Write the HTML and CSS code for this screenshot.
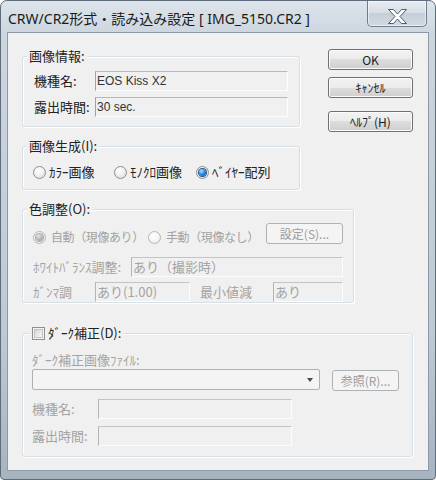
FILE: index.html
```html
<!DOCTYPE html>
<html lang="ja">
<head>
<meta charset="utf-8">
<title>CRW/CR2形式・読み込み設定</title>
<link rel="stylesheet" href="styles.css">
</head>
<body>
<div class="window">
  <div class="titlebar">
    <div class="title">CRW/CR2形式・読み込み設定 [ IMG_5150.CR2 ]</div>
    <div class="close">
      <svg width="58" height="26" viewBox="0 0 58 26">
        <polygon points="20.5,8.5 25.5,8.5 29.5,13 33.5,8.5 38.5,8.5 32,15.5 38.5,22.5 33.5,22.5 29.5,18 25.5,22.5 20.5,22.5 27,15.5" fill="#ffffff" stroke="#4f5b68" stroke-width="1" stroke-linejoin="round"/>
      </svg>
    </div>
  </div>
  <div class="client">
    <div class="top">
      <div class="leftcol">
        <div class="group g1">
          <div class="legend">画像情報:</div>
          <div class="gbody b1">
            <div class="row"><span class="lbl w61">機種名:</span><span class="edit w193 latin">EOS Kiss X2</span></div>
            <div class="row mt6"><span class="lbl w61">露出時間:</span><span class="edit w193 latin">30 sec.</span></div>
          </div>
        </div>
        <div class="group g2">
          <div class="legend">画像生成(I):</div>
          <div class="gbody b2">
            <div class="row">
              <span class="radio w81"><i class="rb"></i>ｶﾗｰ画像</span>
              <span class="radio w82"><i class="rb"></i>ﾓﾉｸﾛ画像</span>
              <span class="radio"><i class="rb on"></i>ﾍﾞｲﾔｰ配列</span>
            </div>
          </div>
        </div>
      </div>
      <div class="buttons">
        <div class="btn">OK</div>
        <div class="btn mt7">ｷｬﾝｾﾙ</div>
        <div class="btn mt13">ﾍﾙﾌﾟ(H)</div>
      </div>
    </div>

    <div class="group g3">
      <div class="legend">色調整(O):</div>
      <div class="gbody b3">
        <div class="row top-row">
          <span class="radio dis narrow w115 mt6"><i class="rb on"></i>自動（現像あり）</span>
          <span class="radio dis narrow w118 mt6"><i class="rb"></i>手動（現像なし）</span>
          <span class="btn dis w77">設定(S)...</span>
        </div>
        <div class="row mt12">
          <span class="lbl dis w98">ﾎﾜｲﾄﾊﾞﾗﾝｽ調整:</span><span class="edit dis w212">あり（撮影時）</span>
        </div>
        <div class="row mt5">
          <span class="lbl dis w62">ｶﾞﾝﾏ調</span><span class="edit dis w95">あり(1.00)</span>
          <span class="lbl dis w73 ml10">最小値減</span><span class="edit dis w70">あり</span>
        </div>
      </div>
    </div>

    <div class="group g4">
      <div class="legend chk"><i class="cb"></i>ﾀﾞｰｸ補正(D):</div>
      <div class="gbody b4">
        <div class="row"><span class="lbl dis">ﾀﾞｰｸ補正画像ﾌｧｲﾙ:</span></div>
        <div class="row mt1 combo-row">
          <span class="combo"><i class="arrow"></i></span>
          <span class="btn dis w67 ml12 mt1">参照(R)...</span>
        </div>
        <div class="row mt8"><span class="lbl dis w66">機種名:</span><span class="edit dis w194"></span></div>
        <div class="row mt7"><span class="lbl dis w66">露出時間:</span><span class="edit dis w194"></span></div>
      </div>
    </div>
  </div>
</div>
</body>
</html>
```
FILE: styles.css
```css
* { box-sizing: border-box; margin: 0; padding: 0; }
html, body { width: 436px; height: 480px; overflow: hidden; background: #ffffff; }
body {
  font-family: "Noto Sans CJK JP", "Noto Sans", sans-serif;
  font-size: 13px;
  color: #222;
}

.window {
  width: 436px;
  height: 480px;
  border: 1px solid #5e6c7b;
  border-radius: 7px 7px 4px 4px;
  background: linear-gradient(#dde4eb 0, #cdd6df 32px, #bec9d3 70%, #a7b3bf 100%);
  display: flex;
  flex-direction: column;
  padding: 0 6px 8px;
}

.titlebar {
  height: 31px;
  display: flex;
  align-items: flex-start;
  flex: none;
}
.title {
  font-family: "Noto Sans", "Noto Sans CJK JP", sans-serif;
  font-size: 14px;
  line-height: 20px;
  color: #1a1a1a;
  margin-top: 8px;
  padding-left: 1px;
  white-space: nowrap;
}
.close {
  margin-left: auto;
  margin-right: 2px;
  width: 60px;
  height: 26px;
  border: 1px solid #6f7d8b;
  border-top: none;
  border-radius: 0 0 5px 5px;
  background: linear-gradient(#e6ebf0 0, #d5dde5 50%, #c6cfd9 50%, #d0d8e1 100%);
  box-shadow: inset 0 0 0 1px rgba(255,255,255,0.55);
  display: flex;
}

.client {
  flex: 1;
  border: 1px solid #8d99a5;
  background: #f0f0f0;
  padding: 16px 0 0 14px;
  display: flex;
  flex-direction: column;
  align-items: flex-start;
}

.top { display: flex; }
.leftcol { width: 278px; display: flex; flex-direction: column; padding-top: 7px; }
.buttons { margin-left: 28px; width: 85px; display: flex; flex-direction: column; }

.group {
  border: 1px solid #d5dfe5;
  border-radius: 3px;
  box-shadow: inset 1px 1px 0 #ffffff, 1px 1px 0 #ffffff;
  display: flex;
  flex-direction: column;
  align-items: flex-start;
}
.legend {
  margin-top: -9px;
  margin-left: 4px;
  height: 16px;
  line-height: 16px;
  padding: 0 2px;
  background: #f0f0f0;
  white-space: nowrap;
  display: flex;
  align-items: center;
}
.legend.chk { margin-left: 7px; }

.g1 { width: 278px; }
.g2 { width: 278px; margin-top: 19px; }
.g3 { width: 332px; margin-top: 19px; }
.g4 { width: 391px; margin-top: 30px; }

.gbody { display: flex; flex-direction: column; align-items: flex-start; }
.b1 { padding: 7px 0 9px 11px; }
.b2 { padding: 10px 0 9px 10px; }
.b3 { padding: 6px 0 0 10px; }
.b4 { padding: 11px 0 10px 9px; }

.row { display: flex; align-items: center; white-space: nowrap; }
.top-row, .combo-row { align-items: flex-start; }

.lbl { line-height: 16px; flex: none; }
.dis { color: #a3a3a3; }

.edit {
  height: 20px;
  line-height: 18px;
  padding-left: 1px;
  border-top: 1px solid #b8b8b8;
  border-left: 1px solid #a2a2a2;
  border-right: 1px solid #fdfdfd;
  border-bottom: 1px solid #fdfdfd;
  background: #f0f0f0;
  overflow: hidden;
  flex: none;
}
.edit.dis { border-top-color: #c4c4c4; border-left-color: #b4b4b4; }
.latin { font-family: "Liberation Sans", "Noto Sans", sans-serif; font-size: 12px; color: #333; }

.radio { display: flex; align-items: center; height: 16px; line-height: 16px; flex: none; }
.radio.narrow { font-size: 12px; letter-spacing: -0.4px; }
.rb {
  width: 13px; height: 13px;
  border-radius: 50%;
  border: 1px solid #8e8f8f;
  background: radial-gradient(circle at 40% 35%, #ffffff 0, #f0f0f0 45%, #d6d6d6 100%);
  margin-right: 3px;
  display: flex;
  align-items: center;
  justify-content: center;
  flex: none;
}
.rb.on::after {
  content: "";
  width: 7px; height: 7px;
  border-radius: 50%;
  background: radial-gradient(circle at 35% 30%, #b4e6ff 0, #2f8fe4 45%, #0b4489 100%);
  box-shadow: 0 0 0 1px #1f4f86;
}
.radio.dis .rb { border-color: #b6b6b6; background: radial-gradient(circle at 40% 35%, #ffffff 0, #f4f4f4 50%, #e2e2e2 100%); margin-right: 5px; }
.radio.dis .rb.on::after {
  background: radial-gradient(circle at 35% 30%, #e6e6e6 0, #b4b4b4 55%, #9c9c9c 100%);
  box-shadow: 0 0 0 1px #a9a9a9;
}

.cb {
  width: 13px; height: 13px;
  border: 1px solid #8f8f8f;
  background: linear-gradient(135deg, #cfcfcf 0, #ececec 60%, #f8f8f8 100%);
  box-shadow: inset 0 0 0 1px #f4f4f4, inset 0 0 0 2px #c0c4c8;
  margin-right: 3px;
  flex: none;
}

.btn {
  height: 21px;
  border: 1px solid #707070;
  border-radius: 3px;
  background: linear-gradient(#f2f2f2 0, #ebebeb 50%, #dddddd 50%, #cfcfcf 100%);
  box-shadow: inset 0 0 0 1px #fbfbfb;
  display: flex;
  align-items: center;
  justify-content: center;
  line-height: 16px;
  flex: none;
  white-space: nowrap;
  font-size: 12px;
}
.btn.dis {
  border-color: #adb2b5;
  background: #f4f4f4;
  box-shadow: none;
  color: #9c9c9c;
}

.combo {
  width: 288px;
  height: 21px;
  border: 1px solid #adb2b5;
  border-radius: 2px;
  background: #f4f4f4;
  display: flex;
  align-items: center;
  justify-content: flex-end;
  padding-right: 6px;
  flex: none;
}
.arrow {
  width: 0; height: 0;
  border-left: 3.5px solid transparent;
  border-right: 3.5px solid transparent;
  border-top: 4px solid #4a4a4a;
}

.w61 { width: 61px; } .w62 { width: 62px; } .w66 { width: 66px; }
.w67 { width: 67px; } .w70 { width: 70px; } .w73 { width: 73px; }
.w77 { width: 77px; } .w81 { width: 81px; } .w82 { width: 82px; }
.w95 { width: 95px; } .w98 { width: 98px; } .w115 { width: 115px; }
.w118 { width: 118px; } .w193 { width: 193px; } .w194 { width: 194px; }
.w212 { width: 212px; }
.mt1 { margin-top: 1px; } .mt5 { margin-top: 5px; } .mt6 { margin-top: 6px; }
.mt7 { margin-top: 7px; } .mt8 { margin-top: 8px; } .mt12 { margin-top: 12px; }
.mt13 { margin-top: 13px; }
.ml10 { margin-left: 10px; } .ml12 { margin-left: 12px; }
```
